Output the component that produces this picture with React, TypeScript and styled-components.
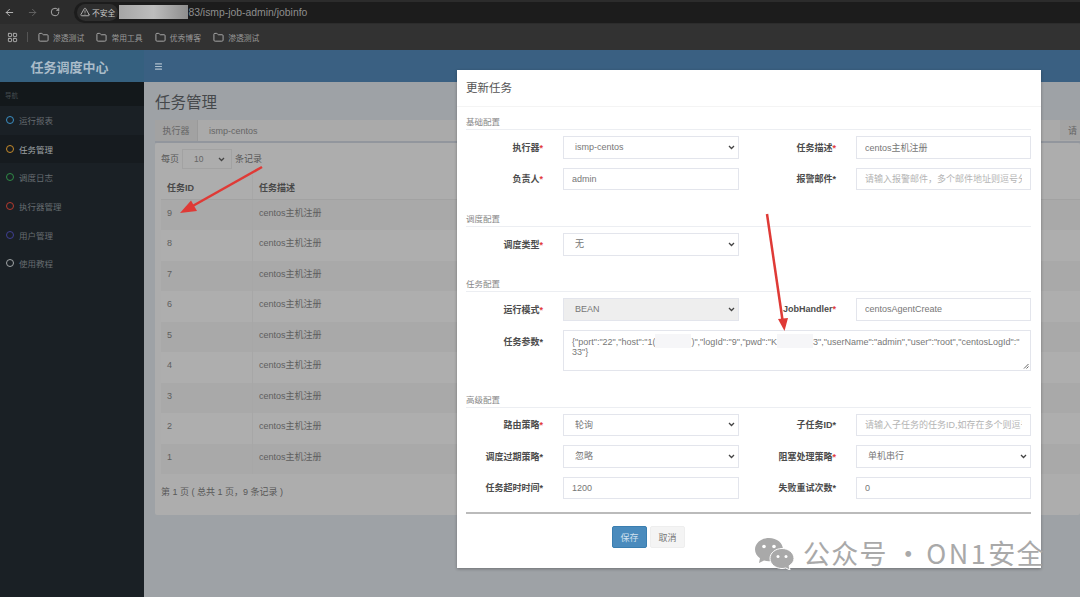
import React from 'react';
import styled, { createGlobalStyle } from 'styled-components';
import { ArrowLeft, ArrowRight, RotateCw, TriangleAlert, Folder, LayoutGrid, Menu } from 'lucide-react';

const Global = createGlobalStyle`
  html, body { margin: 0; padding: 0; background: #9ea2a6; }
  * { box-sizing: border-box; }
  body { font-family: "Liberation Sans", "Noto Sans CJK SC", sans-serif; }
`;

const Page = styled.div`
  position: relative;
  width: 1080px;
  height: 597px;
  overflow: hidden;
  display: flex;
  flex-direction: column;
  background: #9ea2a6;
  font-size: 9px;
  color: #5c5c5c;
`;

const AddressBar = styled.div`
  height: 24px;
  background: #2c2c2c;
  display: flex;
  align-items: center;
  padding-left: 4px;
  gap: 14px;
  color: #c8c8c8;
`;

const NavIcons = styled.div`
  display: flex;
  align-items: center;
  gap: 12px;
`;

const UrlPill = styled.div`
  flex: 1;
  height: 21px;
  border-radius: 11px 0 0 11px;
  background: #1c1c1c;
  display: flex;
  align-items: center;
  padding-left: 3px;
  font-size: 10.4px;
  color: #8e8e8e;
`;

const SecurityChip = styled.div`
  display: flex;
  align-items: center;
  gap: 2px;
  height: 17px;
  padding: 0 3px;
  border-radius: 9px;
  background: #2e2e2e;
  color: #c8c8c8;
  font-size: 7.8px;
`;

const Redacted = styled.span`
  width: 69px;
  height: 14px;
  margin-left: 1px;
  background: linear-gradient(90deg, #a6a6a6, #bdbdbd 50%, #8d8d8d);
`;

const BookmarkBar = styled.div`
  height: 26px;
  background: #323232;
  display: flex;
  align-items: center;
  padding-left: 7px;
  color: #b0b0b0;
`;

const Separator = styled.span`
  width: 1px;
  height: 10px;
  background: #555;
  margin: 0 10px 0 9px;
`;

const Bookmark = styled.div`
  display: flex;
  align-items: center;
  gap: 4px;
  width: 58.4px;
  font-size: 7.8px;
  color: #9a9a9a;
`;

const Shell = styled.div`
  flex: 1;
  display: flex;
  min-height: 0;
`;

const Sidebar = styled.aside`
  width: 144px;
  flex: none;
  background: #1a2025;
  display: flex;
  flex-direction: column;
`;

const Logo = styled.div`
  height: 32px;
  background: #35607f;
  color: #aabcc9;
  display: flex;
  align-items: center;
  justify-content: center;
  font-size: 13px;
  font-weight: 700;
  padding-right: 5px;
`;

const NavHeading = styled.div`
  height: 24px;
  background: #13181b;
  color: #444c50;
  font-size: 6.5px;
  padding: 8px 0 0 5px;
`;

const NavItem = styled.div<{ $active?: boolean }>`
  height: 28.6px;
  display: flex;
  align-items: center;
  gap: 5px;
  padding-left: 6px;
  font-size: 8.5px;
  color: ${p => (p.$active ? '#9fa3a6' : '#666c70')};
  background: ${p => (p.$active ? '#161b1f' : 'transparent')};
`;

const Dot = styled.span<{ $color: string }>`
  width: 8px;
  height: 8px;
  border-radius: 50%;
  border: 1.6px solid ${p => p.$color};
`;

const Main = styled.main`
  flex: 1;
  min-width: 0;
  display: flex;
  flex-direction: column;
`;

const TopBar = styled.div`
  height: 32px;
  background: #3a6082;
  color: #aebfcd;
  display: flex;
  align-items: center;
  padding-left: 10px;
`;

const Content = styled.div`
  flex: 1;
  padding: 0 0 0 11px;
  display: flex;
  flex-direction: column;
`;

const Title = styled.h1`
  margin: 0;
  height: 38px;
  padding-top: 9px;
  font-size: 15.5px;
  font-weight: 400;
  line-height: 24px;
  color: #45484b;
`;

const FilterRow = styled.div`
  height: 23px;
  display: flex;
  background: #aaaaaa;
  border-bottom: 2px solid #92969d;
  font-size: 9px;
  color: #666;
`;

const FilterAddon = styled.div`
  width: 43px;
  background: #a2a2a2;
  display: flex;
  align-items: center;
  justify-content: center;
  border-right: 1px solid #9a9a9a;
`;

const FilterValue = styled.div`
  flex: 1;
  display: flex;
  align-items: center;
  padding-left: 11px;
`;

const FilterButton = styled.div`
  width: 20px;
  margin-bottom: 1px;
  background: #a4a4a4;
  display: flex;
  align-items: center;
  padding-left: 8px;
  overflow: hidden;
  white-space: nowrap;
`;

const Box = styled.section`
  height: 372px;
  background: #adadad;
  border-radius: 2px;
  padding: 6px 0 0 6px;
  display: flex;
  flex-direction: column;
`;

const PerPage = styled.div`
  height: 26px;
  display: flex;
  align-items: flex-start;
  gap: 3px;
  font-size: 9px;
  color: #585858;
  line-height: 20px;
`;

const chevron = (stroke: string) =>
  `url("data:image/svg+xml,%3Csvg xmlns='http://www.w3.org/2000/svg' width='7' height='5' viewBox='0 0 7 5'%3E%3Cpath d='M1 1l2.500 2.500L6 1' fill='none' stroke='%23${stroke}' stroke-width='1.300'/%3E%3C/svg%3E")`;

const PerPageSelect = styled.select`
  width: 50px;
  height: 20px;
  appearance: none;
  background: #adadad ${chevron('444444')} no-repeat right 6px center;
  border: 1px solid #a2a2a2;
  color: #666;
  font-size: 8.5px;
  padding-left: 11px;
  font-family: inherit;
`;

const TableRow = styled.div<{ $shade?: string; $head?: boolean }>`
  display: grid;
  grid-template-columns: 92px 1fr;
  height: ${p => (p.$head ? '25px' : '30.45px')};
  background: ${p => p.$shade ?? 'transparent'};
  ${p => (p.$head ? 'border-bottom: 1px solid #a2a2a2; font-weight: 700; color: #484848;' : 'color: #5e5e5e;')}
`;

const Cell = styled.div`
  padding: 8px 0 0 6px;
  border-right: 1px solid #a7a7a7;
  line-height: 10px;
  font-size: 9px;
  &:last-child { border-right: 0; }
`;

const Pagination = styled.div`
  margin-top: 11px;
  font-size: 9px;
  color: #585858;
`;

const Overlay = styled.svg`
  position: absolute;
  inset: 0;
  pointer-events: none;
`;

const Modal = styled.div`
  position: absolute;
  left: 457px;
  top: 70px;
  width: 584px;
  height: 498px;
  background: #fff;
  box-shadow: 0 1px 3px rgba(0, 0, 0, .3);
  display: flex;
  flex-direction: column;
`;

const ModalHeader = styled.div`
  height: 37px;
  padding: 12px 0 0 9px;
  font-size: 11.5px;
  line-height: 13px;
  color: #555;
  border-bottom: 1px solid #f4f4f4;
`;

const ModalBody = styled.div`
  padding: 10px 10px 0 9px;
  display: flex;
  flex-direction: column;
`;

const Legend = styled.div`
  font-size: 8.5px;
  line-height: 10px;
  color: #888;
  padding-bottom: 2px;
  border-bottom: 1px solid #eceef2;
  margin-bottom: 6px;
`;

const FormGrid = styled.div<{ $bottom: number }>`
  display: grid;
  grid-template-columns: 77px 176px 77px 175px;
  column-gap: 20px;
  row-gap: 9px;
  margin-bottom: ${p => p.$bottom}px;
`;

const Label = styled.label`
  justify-self: end;
  align-self: center;
  font-size: 9px;
  font-weight: 700;
  color: #4c4c4c;
  white-space: nowrap;
`;

const AreaLabel = styled(Label)`
  align-self: start;
  margin-top: 5px;
`;

const Star = styled.span<{ $red?: boolean }>`
  color: ${p => (p.$red ? '#e23b3b' : '#444')};
`;

const controlBase = `
  height: 22.5px;
  width: 100%;
  border: 1px solid #e3e5ec;
  font-family: "Liberation Sans", "Noto Sans CJK SC", sans-serif;
  font-size: 9px;
  color: #777;
  border-radius: 0;
  outline: none;
`;

const Input = styled.input`
  ${controlBase}
  padding: 0 8px;
  background: #fff;
  &::placeholder { color: #b4b4b4; opacity: 1; }
`;

const Select = styled.select<{ $disabled?: boolean }>`
  ${controlBase}
  appearance: none;
  padding-left: 11px;
  background: ${p => (p.$disabled ? '#eeeeee' : '#fff')} ${chevron('444444')} no-repeat right 3px center;
`;

const ParamArea = styled.div`
  grid-column: 2 / 5;
  height: 41px;
  position: relative;
  border: 1px solid #e3e5ec;
  padding: 3px 3px 3px 8px;
  font-size: 9px;
  line-height: 10.5px;
  color: #777;
  white-space: nowrap;
`;

const Mask = styled.span<{ $w: number }>`
  display: inline-block;
  width: ${p => p.$w}px;
  height: 14px;
  margin-bottom: -3px;
  background: #f6f6f8;
`;

const Grip = styled.svg`
  position: absolute;
  right: 1px;
  bottom: 1px;
`;

const Rule = styled.div`
  height: 2px;
  background: #bbbbbb;
  margin: 4px 0 12px;
`;

const Actions = styled.div`
  display: flex;
  gap: 3px;
  padding-left: 146px;
`;

const Button = styled.button<{ $primary?: boolean }>`
  width: 35px;
  height: 22px;
  padding: 0;
  border: 1px solid ${p => (p.$primary ? '#3a7eb0' : '#eeeeee')};
  border-radius: 2px;
  background: ${p => (p.$primary ? '#4a8bbd' : '#f4f4f4')};
  color: ${p => (p.$primary ? '#cfe0ee' : '#777')};
  font-size: 9px;
  font-family: inherit;
`;

const Watermark = styled.div`
  position: absolute;
  left: 754px;
  top: 536px;
  display: flex;
  align-items: center;
  gap: 9px;
  color: #a9a9a9;
  font-size: 27px;
  line-height: 34px;
  font-family: "Noto Sans CJK SC", sans-serif;
  letter-spacing: 1.2px;
  white-space: nowrap;
`;

const WatermarkLatin = styled.span`
  margin-left: -4px;
  letter-spacing: 2.5px;
`;

const navItems = [
  { t: '运行报表', c: '#3b8fc4' },
  { t: '任务管理', c: '#c58a2a', active: true },
  { t: '调度日志', c: '#2f8a46' },
  { t: '执行器管理', c: '#b6392e' },
  { t: '用户管理', c: '#3f3f94' },
  { t: '使用教程', c: '#a2a6a8' },
];

const ids = [9, 8, 7, 6, 5, 4, 3, 2, 1];

export default function App() {
  return (
    <Page>
      <Global />
      <AddressBar>
        <NavIcons>
          <ArrowLeft size={11} color="#bdbdbd" />
          <ArrowRight size={11} color="#666" />
          <RotateCw size={10} color="#bdbdbd" />
        </NavIcons>
        <UrlPill>
          <SecurityChip><TriangleAlert size={10} />不安全</SecurityChip>
          <Redacted />
          <span>83/ismp-job-admin/jobinfo</span>
        </UrlPill>
      </AddressBar>
      <BookmarkBar>
        <LayoutGrid size={11} />
        <Separator />
        {['渗透测试', '常用工具', '优秀博客', '渗透测试'].map((b, i) => (
          <Bookmark key={i}><Folder size={11} color="#b0b0b0" />{b}</Bookmark>
        ))}
      </BookmarkBar>
      <Shell>
        <Sidebar>
          <Logo>任务调度中心</Logo>
          <NavHeading>导航</NavHeading>
          {navItems.map(n => (
            <NavItem key={n.t} $active={n.active}><Dot $color={n.c} />{n.t}</NavItem>
          ))}
        </Sidebar>
        <Main>
          <TopBar><Menu size={9} strokeWidth={3} /></TopBar>
          <Content>
            <Title>任务管理</Title>
            <FilterRow>
              <FilterAddon>执行器</FilterAddon>
              <FilterValue>ismp-centos</FilterValue>
              <FilterButton>请</FilterButton>
            </FilterRow>
            <Box>
              <PerPage>
                每页
                <PerPageSelect defaultValue="10"><option>10</option></PerPageSelect>
                条记录
              </PerPage>
              <TableRow $head>
                <Cell>任务ID</Cell>
                <Cell>任务描述</Cell>
              </TableRow>
              {ids.map((id, i) => (
                <TableRow key={id} $shade={i % 2 === 0 ? '#a9a9a9' : '#aeaeae'}>
                  <Cell>{id}</Cell>
                  <Cell>centos主机注册</Cell>
                </TableRow>
              ))}
              <Pagination>第 1 页 ( 总共 1 页，9 条记录 )</Pagination>
            </Box>
          </Content>
        </Main>
      </Shell>

      <Overlay width="1080" height="597" viewBox="0 0 1080 597">
        <line x1="262" y1="167" x2="190" y2="207.500" stroke="#df3a36" strokeWidth="2.500" />
        <polygon points="180,213 191,200.500 197,211" fill="#df3a36" />
      </Overlay>

      <Modal>
        <ModalHeader>更新任务</ModalHeader>
        <ModalBody>
          <Legend>基础配置</Legend>
          <FormGrid $bottom={24}>
            <Label>执行器<Star $red>*</Star></Label>
            <Select defaultValue="ismp-centos"><option>ismp-centos</option></Select>
            <Label>任务描述<Star $red>*</Star></Label>
            <Input defaultValue="centos主机注册" />
            <Label>负责人<Star $red>*</Star></Label>
            <Input defaultValue="admin" />
            <Label>报警邮件<Star>*</Star></Label>
            <Input placeholder="请输入报警邮件，多个邮件地址则逗号分隔" />
          </FormGrid>
          <Legend>调度配置</Legend>
          <FormGrid $bottom={23.5}>
            <Label>调度类型<Star $red>*</Star></Label>
            <Select defaultValue="无"><option>无</option></Select>
          </FormGrid>
          <Legend>任务配置</Legend>
          <FormGrid $bottom={24}>
            <Label>运行模式<Star $red>*</Star></Label>
            <Select $disabled defaultValue="BEAN"><option>BEAN</option></Select>
            <Label>JobHandler<Star $red>*</Star></Label>
            <Input defaultValue="centosAgentCreate" />
            <AreaLabel>任务参数<Star>*</Star></AreaLabel>
            <ParamArea>
              {'{"port":"22","host":"1('}<Mask $w={36} />{')","logId":"9","pwd":"K'}<Mask $w={36} />{'3","userName":"admin","user":"root","centosLogId":"'}
              <br />
              {'33"}'}
              <Grip width="6" height="6" viewBox="0 0 6 6"><path d="M5.500 1 1 5.500M5.500 3.500 3.500 5.500" stroke="#666" strokeWidth="1" /></Grip>
            </ParamArea>
          </FormGrid>
          <Legend>高级配置</Legend>
          <FormGrid $bottom={9}>
            <Label>路由策略<Star $red>*</Star></Label>
            <Select defaultValue="轮询"><option>轮询</option></Select>
            <Label>子任务ID<Star>*</Star></Label>
            <Input placeholder="请输入子任务的任务ID,如存在多个则逗号分隔" />
            <Label>调度过期策略<Star>*</Star></Label>
            <Select defaultValue="忽略"><option>忽略</option></Select>
            <Label>阻塞处理策略<Star $red>*</Star></Label>
            <Select defaultValue="单机串行"><option>单机串行</option></Select>
            <Label>任务超时时间<Star>*</Star></Label>
            <Input defaultValue="1200" />
            <Label>失败重试次数<Star>*</Star></Label>
            <Input defaultValue="0" />
          </FormGrid>
          <Rule />
          <Actions>
            <Button $primary>保存</Button>
            <Button>取消</Button>
          </Actions>
        </ModalBody>
      </Modal>

      <Overlay width="1080" height="597" viewBox="0 0 1080 597">
        <line x1="767" y1="214" x2="782.500" y2="320" stroke="#df3a36" strokeWidth="2.500" />
        <polygon points="784.500,331 778,319 788,318" fill="#df3a36" />
      </Overlay>

      <Watermark>
        <svg width="40" height="33" viewBox="0 0 40 33">
          <path d="M15 1C7 1 1 6.300 1 12.500c0 3.600 2 6.700 5 8.800L5 26l5-2.500c1.600.5 3.300.7 5 .7 8 0 14-5.200 14-11.700S23 1 15 1Z" fill="#a9a9a9" />
          <circle cx="10" cy="9.500" r="1.800" fill="#fff" />
          <circle cx="20" cy="9.500" r="1.800" fill="#fff" />
          <path d="M28 11.500c-6.600 0-12 4.500-12 10s5.400 10 12 10c1.300 0 2.600-.2 3.800-.5L36 33l-.9-4.200c2.900-1.800 4.900-4.300 4.900-7.300 0-5.500-5.400-10-12-10Z" fill="#a9a9a9" stroke="#fff" strokeWidth="1" />
          <circle cx="24" cy="19.500" r="1.500" fill="#fff" />
          <circle cx="32" cy="19.500" r="1.500" fill="#fff" />
        </svg>
        <span>公众号 · <WatermarkLatin>ON1</WatermarkLatin>安全</span>
      </Watermark>
    </Page>
  );
}
